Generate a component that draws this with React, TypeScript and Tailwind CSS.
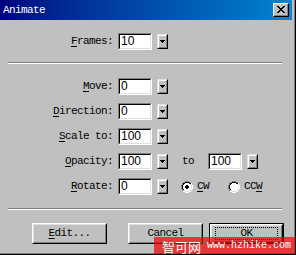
import React from "react";

const mono = { fontFamily: '"Liberation Mono", "DejaVu Sans Mono", monospace' };

function Field({ value, className = "" }: { value: string; className?: string }) {
  return (
    <div className={`w-[34px] h-[17px] border-t border-l border-t-[#808080] border-l-[#808080] border-b border-r border-b-white border-r-white ${className}`}>
      <div className="w-full h-full bg-white border-t border-l border-t-black border-l-black border-b border-r border-b-[#dfdfdf] border-r-[#dfdfdf] pl-[1px] text-[12px] leading-[13px] text-black" style={{ fontFamily: '"Liberation Sans", Arial, sans-serif' }}>
        {value}
      </div>
    </div>
  );
}

function Drop({ className = "" }: { className?: string }) {
  return (
    <div className={`w-[11px] h-[15px] border-t border-l border-t-[#dfdfdf] border-l-[#dfdfdf] border-b border-r border-b-black border-r-black ${className}`}>
      <div className="w-full h-full bg-[#c0c0c0] border-t border-l border-t-white border-l-white border-b border-r border-b-[#808080] border-r-[#808080] flex items-center justify-center">
        <svg width="5" height="3" viewBox="0 0 5 3" shapeRendering="crispEdges">
          <rect x="0" y="0" width="5" height="1" fill="#000" />
          <rect x="1" y="1" width="3" height="1" fill="#000" />
          <rect x="2" y="2" width="1" height="1" fill="#000" />
        </svg>
      </div>
    </div>
  );
}

function Label({ pre, u, rest }: { pre?: string; u: string; rest: string }) {
  return (
    <div className="w-[113px] text-right text-[11px] tracking-[-0.6px] text-black whitespace-pre" style={mono}>
      {pre}
      <span className="underline underline-offset-2">{u}</span>
      {rest}
    </div>
  );
}

function Sep() {
  return (
    <div className="ml-[8px] w-[274px]">
      <div className="h-px bg-[#808080]" />
      <div className="h-px bg-white" />
    </div>
  );
}

function Radio({ checked }: { checked?: boolean }) {
  return (
    <svg width="12" height="12" viewBox="0 0 12 12" shapeRendering="crispEdges">
      <path d="M4 0h4v1H4zM2 1h2v1H2zM8 1h2v1H8zM1 2h1v2H1zM0 4h1v4H0zM1 8h1v2H1z" fill="#808080" />
      <path d="M4 1h4v1H4zM2 2h2v1H2zM8 2h2v1H8zM2 3h1v1H2zM1 4h1v4H1zM2 8h1v1H2z" fill="#000" />
      <path d="M10 2h1v2h-1zM11 4h1v4h-1zM10 8h1v2h-1zM8 10h2v1H8zM2 10h2v1H2zM4 11h4v1H4z" fill="#fff" />
      <path d="M9 3h1v1H9zM10 4h1v4h-1zM9 8h1v1H9zM8 9h1v1H8zM3 9h1v1H3zM4 10h4v1H4z" fill="#dfdfdf" />
      <path d="M4 2h4v1H4zM3 3h6v1H3zM2 4h8v4H2zM3 8h6v1H3zM4 9h4v1H4z" fill="#fff" />
      {checked && <path d="M5 4h2v1H5zM4 5h4v2H4zM5 7h2v1H5z" fill="#000" />}
    </svg>
  );
}

function Btn({ children, isDefault, className = "" }: { children: React.ReactNode; isDefault?: boolean; className?: string }) {
  const inner = (
    <div className="w-full h-full border-t border-l border-t-white border-l-white border-b border-r border-b-black border-r-black">
      <div className="w-full h-full border-t border-l border-t-[#dfdfdf] border-l-[#dfdfdf] border-b border-r border-b-[#808080] border-r-[#808080] flex items-center justify-center text-[11px] tracking-[-0.6px] text-black" style={mono}>
        {isDefault ? (
          <div className="w-[63px] h-[13px] border border-dotted border-black flex items-center justify-center">{children}</div>
        ) : (
          children
        )}
      </div>
    </div>
  );
  return (
    <div className={`w-[75px] h-[21px] ${isDefault ? "border border-black" : ""} ${className}`}>{inner}</div>
  );
}

export default function App() {
  return (
    <div className="w-[296px] h-[255px] bg-[#c0c0c0] border-r border-b border-r-black border-b-black relative overflow-hidden">
      <div className="w-full h-full border-r border-b border-r-[#808080] border-b-[#808080] pr-[2px] flex flex-col">
        {/* title bar */}
        <div className="h-[20px] bg-gradient-to-r from-[#000080] to-[#1084d0] flex items-center pl-[3px] pr-[2px]">
          <span className="text-white text-[11px] tracking-[-0.6px] flex-1" style={mono}>Animate</span>
          <div className="w-[16px] h-[14px] border-t border-l border-t-white border-l-white border-b border-r border-b-black border-r-black mr-[1px]">
            <div className="w-full h-full bg-[#c0c0c0] border-b border-r border-b-[#808080] border-r-[#808080] flex items-center justify-center">
              <svg width="8" height="7" viewBox="0 0 8 7" shapeRendering="crispEdges">
                <path d="M0 0h2v1H0zM6 0h2v1H6zM1 1h2v1H1zM5 1h2v1H5zM2 2h4v1H2zM3 3h2v1H3zM2 4h4v1H2zM1 5h2v1H1zM5 5h2v1H5zM0 6h2v1H0zM6 6h2v1H6z" fill="#000" />
              </svg>
            </div>
          </div>
        </div>

        {/* frames */}
        <div className="flex items-center h-[25px] mt-[9px]">
          <Label u="F" rest="rames:" />
          <Field value="10" className="ml-[5px]" />
          <Drop className="ml-[5px]" />
        </div>

        <div className="mt-[8px]">
          <Sep />
        </div>

        <div className="flex flex-col mt-[10px]">
          <div className="flex items-center h-[25px]">
            <Label u="M" rest="ove:" />
            <Field value="0" className="ml-[5px]" />
            <Drop className="ml-[5px]" />
          </div>
          <div className="flex items-center h-[25px]">
            <Label u="D" rest="irection:" />
            <Field value="0" className="ml-[5px]" />
            <Drop className="ml-[5px]" />
          </div>
          <div className="flex items-center h-[25px]">
            <Label u="S" rest="cale to:" />
            <Field value="100" className="ml-[5px]" />
            <Drop className="ml-[5px]" />
          </div>
          <div className="flex items-center h-[25px]">
            <Label u="O" rest="pacity:" />
            <Field value="100" className="ml-[5px]" />
            <Drop className="ml-[5px]" />
            <span className="ml-[14px] text-[11px] tracking-[-0.6px] text-black" style={mono}>to</span>
            <Field value="100" className="ml-[14px]" />
            <Drop className="ml-[5px]" />
          </div>
          <div className="flex items-center h-[25px]">
            <Label u="R" rest="otate:" />
            <Field value="0" className="ml-[5px]" />
            <Drop className="ml-[5px]" />
            <div className="ml-[13px] flex items-center gap-[4px]">
              <Radio checked />
              <span className="text-[11px] tracking-[-0.6px] text-black" style={mono}>
                <span className="underline underline-offset-2">C</span>W
              </span>
            </div>
            <div className="ml-[19px] flex items-center gap-[4px]">
              <Radio />
              <span className="text-[11px] tracking-[-0.6px] text-black" style={mono}>
                CC<span className="underline underline-offset-2">W</span>
              </span>
            </div>
          </div>
        </div>

        <div className="mt-[9px]">
          <Sep />
        </div>

        <div className="flex items-center mt-[13px]">
          <Btn className="ml-[32px]">
            <span><span className="underline underline-offset-2">E</span>dit...</span>
          </Btn>
          <Btn className="ml-[21px]">Cancel</Btn>
          <Btn isDefault className="ml-[6px]">OK</Btn>
        </div>
      </div>

      {/* watermark overlay */}
      <div className="absolute left-[154px] top-[237px] w-[142px] h-[18px] bg-[rgba(240,0,0,0.7)] flex items-center pl-[8px] gap-[6px] text-white whitespace-nowrap">
        <span className="text-[13px] leading-none" style={{ fontFamily: '"Noto Sans CJK SC", sans-serif' }}>智可网</span>
        <span className="text-[10px] leading-none" style={mono}>www.hzhike.com</span>
      </div>
    </div>
  );
}
